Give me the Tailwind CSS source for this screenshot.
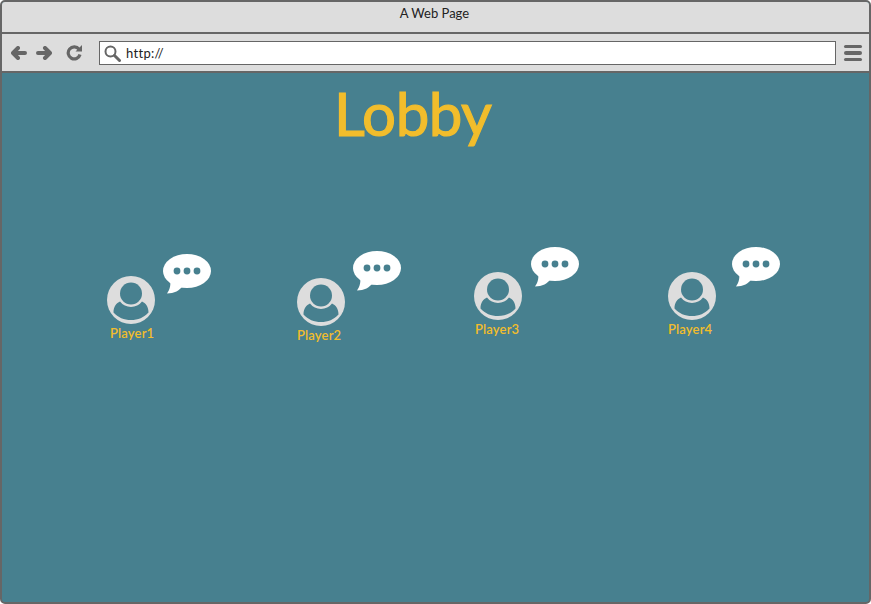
<!DOCTYPE html>
<html lang="en">
<head>
<meta charset="UTF-8">
<title>A Web Page</title>
<script src="https://cdn.jsdelivr.net/npm/@tailwindcss/browser@4"></script>
</head>
<body class="bg-white overflow-hidden font-['Lato',sans-serif]">
<div class="w-[871px] h-[604px] flex flex-col border-2 border-[#666666] rounded-[5px] overflow-hidden bg-[#47808f]">
  <!-- Title bar -->
  <div class="h-[32px] shrink-0 bg-[#dddddd] border-b-2 border-[#666666] flex justify-center pt-[3px] pr-[2px]">
    <span class="text-[13px] leading-[17px] text-[#222222]">A Web Page</span>
  </div>
  <!-- Toolbar -->
  <div class="h-[39px] shrink-0 bg-[#dddddd] border-b-2 border-[#666666] flex items-center pl-[9px] pr-[7px] pt-[1px]">
    <svg class="w-[16px] h-[14px] shrink-0" viewBox="0 0 16 14"><path d="M7 2 2 7l5 5M2.500 7H14" fill="none" stroke="#666666" stroke-width="4" stroke-linejoin="round" stroke-linecap="round"/></svg>
    <svg class="w-[16px] h-[14px] shrink-0 ml-[9px]" viewBox="0 0 16 14"><path d="M9 2 14 7l-5 5M13.500 7H2" fill="none" stroke="#666666" stroke-width="4" stroke-linejoin="round" stroke-linecap="round"/></svg>
    <svg class="w-[16px] h-[16px] shrink-0 ml-[14px]" viewBox="0 0 16 16"><path d="M13 4.300A6 6 0 1 0 14 9.500" fill="none" stroke="#666666" stroke-width="3.200"/><path d="M9.500 6.500h6.500V0z" fill="#666666"/></svg>
    <div class="w-[737px] h-[24px] shrink-0 ml-[17px] bg-white border border-[#666666] flex items-center pl-[4px]">
      <svg class="w-[17px] h-[17px] shrink-0" viewBox="0 0 17 17"><circle cx="6.500" cy="6.500" r="5" fill="none" stroke="#666666" stroke-width="2"/><path d="m10.500 10.500 5 5" stroke="#666666" stroke-width="3" stroke-linecap="round"/></svg>
      <span class="ml-[5px] text-[13px] leading-none tracking-[0.3px] text-[#222222]">http://</span>
    </div>
    <div class="ml-auto w-[18px] flex flex-col gap-[3px]">
      <div class="h-[3.500px] rounded-full bg-[#666666]"></div>
      <div class="h-[3.500px] rounded-full bg-[#666666]"></div>
      <div class="h-[3.500px] rounded-full bg-[#666666]"></div>
    </div>
  </div>
  <!-- Lobby canvas -->
  <div class="relative flex-1">
    <h1 class="absolute left-[332px] top-[2px] text-[60px] leading-[76px] tracking-[-0.5px] text-[#f2bd2c] font-normal [-webkit-text-stroke:1.2px_#f2bd2c]">Lobby</h1>

    <div class="absolute left-[105px] top-[181px] w-[104px] h-[70px]">
      <svg class="absolute left-[56px] top-0 w-[48px] h-[40px]" viewBox="0 0 48 40"><ellipse cx="24" cy="17" rx="24" ry="17" fill="#ffffff"/><path d="M7 25c1 6 0 10-3 14.500 7 0 13-3 16-8z" fill="#ffffff"/><circle cx="14" cy="17" r="3.400" fill="#47808f"/><circle cx="24" cy="17" r="3.400" fill="#47808f"/><circle cx="34" cy="17" r="3.400" fill="#47808f"/></svg>
      <svg class="absolute left-0 top-[22px] w-[48px] h-[48px]" viewBox="0 0 48 48"><circle cx="24" cy="24" r="24" fill="#dddddd"/><circle cx="24" cy="17.500" r="11" fill="#47808f"/><path d="M13 25.500A13.600 13.600 0 0 0 35 25.500C38.500 27 41.500 30.500 41.500 36.500 37 41.500 31 44 24 44S11 41.500 6.500 36.500C6.500 30.500 9.500 27 13 25.500z" fill="#47808f"/></svg>
    </div>
    <span class="absolute left-[108px] top-[252px] text-[13px] leading-[16px] tracking-[0.15px] font-semibold text-[#f2bd2c]">Player1</span>

    <div class="absolute left-[295px] top-[178px] w-[104px] h-[75px]">
      <svg class="absolute left-[56px] top-0 w-[48px] h-[40px]" viewBox="0 0 48 40"><ellipse cx="24" cy="17" rx="24" ry="17" fill="#ffffff"/><path d="M7 25c1 6 0 10-3 14.500 7 0 13-3 16-8z" fill="#ffffff"/><circle cx="14" cy="17" r="3.400" fill="#47808f"/><circle cx="24" cy="17" r="3.400" fill="#47808f"/><circle cx="34" cy="17" r="3.400" fill="#47808f"/></svg>
      <svg class="absolute left-0 top-[27px] w-[48px] h-[48px]" viewBox="0 0 48 48"><circle cx="24" cy="24" r="24" fill="#dddddd"/><circle cx="24" cy="17.500" r="11" fill="#47808f"/><path d="M13 25.500A13.600 13.600 0 0 0 35 25.500C38.500 27 41.500 30.500 41.500 36.500 37 41.500 31 44 24 44S11 41.500 6.500 36.500C6.500 30.500 9.500 27 13 25.500z" fill="#47808f"/></svg>
    </div>
    <span class="absolute left-[295px] top-[254px] text-[13px] leading-[16px] tracking-[0.15px] font-semibold text-[#f2bd2c]">Player2</span>

    <div class="absolute left-[472px] top-[174px] w-[105px] h-[73px]">
      <svg class="absolute left-[57px] top-0 w-[48px] h-[40px]" viewBox="0 0 48 40"><ellipse cx="24" cy="17" rx="24" ry="17" fill="#ffffff"/><path d="M7 25c1 6 0 10-3 14.500 7 0 13-3 16-8z" fill="#ffffff"/><circle cx="14" cy="17" r="3.400" fill="#47808f"/><circle cx="24" cy="17" r="3.400" fill="#47808f"/><circle cx="34" cy="17" r="3.400" fill="#47808f"/></svg>
      <svg class="absolute left-0 top-[25px] w-[48px] h-[48px]" viewBox="0 0 48 48"><circle cx="24" cy="24" r="24" fill="#dddddd"/><circle cx="24" cy="17.500" r="11" fill="#47808f"/><path d="M13 25.500A13.600 13.600 0 0 0 35 25.500C38.500 27 41.500 30.500 41.500 36.500 37 41.500 31 44 24 44S11 41.500 6.500 36.500C6.500 30.500 9.500 27 13 25.500z" fill="#47808f"/></svg>
    </div>
    <span class="absolute left-[473px] top-[248px] text-[13px] leading-[16px] tracking-[0.15px] font-semibold text-[#f2bd2c]">Player3</span>

    <div class="absolute left-[666px] top-[174px] w-[112px] h-[73px]">
      <svg class="absolute left-[64px] top-0 w-[48px] h-[40px]" viewBox="0 0 48 40"><ellipse cx="24" cy="17" rx="24" ry="17" fill="#ffffff"/><path d="M7 25c1 6 0 10-3 14.500 7 0 13-3 16-8z" fill="#ffffff"/><circle cx="14" cy="17" r="3.400" fill="#47808f"/><circle cx="24" cy="17" r="3.400" fill="#47808f"/><circle cx="34" cy="17" r="3.400" fill="#47808f"/></svg>
      <svg class="absolute left-0 top-[25px] w-[48px] h-[48px]" viewBox="0 0 48 48"><circle cx="24" cy="24" r="24" fill="#dddddd"/><circle cx="24" cy="17.500" r="11" fill="#47808f"/><path d="M13 25.500A13.600 13.600 0 0 0 35 25.500C38.500 27 41.500 30.500 41.500 36.500 37 41.500 31 44 24 44S11 41.500 6.500 36.500C6.500 30.500 9.500 27 13 25.500z" fill="#47808f"/></svg>
    </div>
    <span class="absolute left-[666px] top-[248px] text-[13px] leading-[16px] tracking-[0.15px] font-semibold text-[#f2bd2c]">Player4</span>
  </div>
</div>
</body>
</html>
